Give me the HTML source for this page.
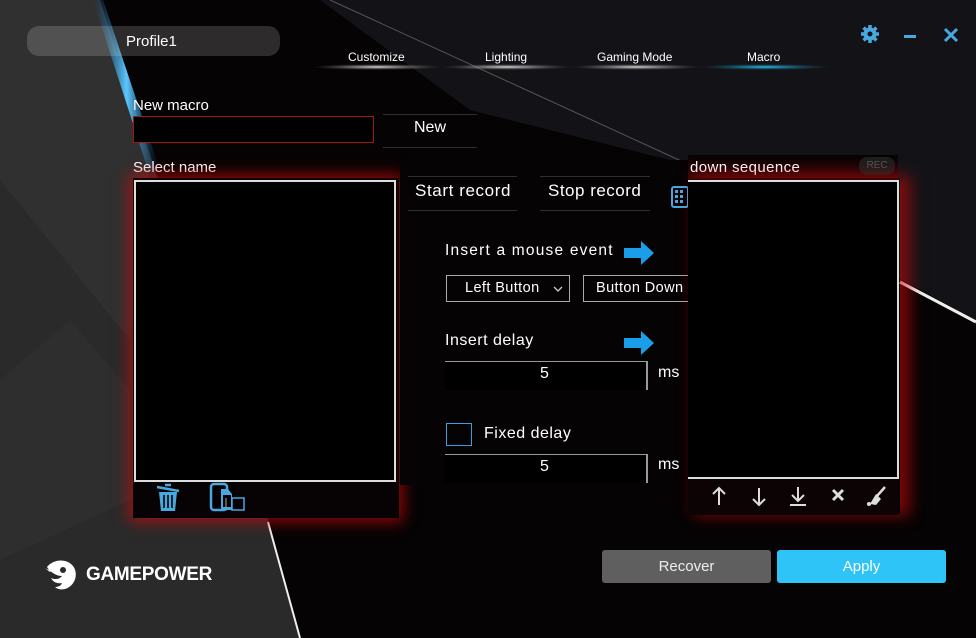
<!DOCTYPE html>
<html><head><meta charset="utf-8"><style>
*{margin:0;padding:0;box-sizing:border-box}
body{width:976px;height:638px;overflow:hidden;background:#050304;font-family:"Liberation Sans",sans-serif;color:#fff;position:relative}
.a{position:absolute}
.t{position:absolute;white-space:nowrap;line-height:1}
</style></head><body>
<svg class="a" style="left:0;top:0" width="976" height="638">
<defs>
<linearGradient id="bl" x1="0" x2="1"><stop offset="0" stop-color="#0a4a80" stop-opacity="0"/><stop offset="0.5" stop-color="#5cc8ff"/><stop offset="1" stop-color="#0a4a80" stop-opacity="0"/></linearGradient>
<radialGradient id="ul"><stop offset="0" stop-color="#ddd"/><stop offset="1" stop-color="#666" stop-opacity="0"/></radialGradient>
<radialGradient id="uc"><stop offset="0" stop-color="#2fc0f0"/><stop offset="1" stop-color="#0a6080" stop-opacity="0"/></radialGradient>
</defs>
<polygon points="0,0 100,0 270,525 300,638 0,638" fill="#2a2a2a"/>
<polygon points="0,0 100,0 150,160 130,340 0,180" fill="#303030"/>
<polygon points="0,380 70,320 130,390 130,500 0,560" fill="#2e2e2e"/>
<polygon points="320,0 976,0 976,320 690,165 470,110" fill="#131317"/>
<line x1="330" y1="0" x2="690" y2="165" stroke="#555" stroke-width="1"/>
<line x1="900" y1="282" x2="976" y2="322" stroke="#eee" stroke-width="3"/>
<line x1="268" y1="522" x2="300" y2="638" stroke="#eee" stroke-width="2"/>
<polygon points="93,0 103,0 160,170 148,170" fill="url(#bl)"/>
<ellipse cx="377" cy="67" rx="65" ry="3" fill="url(#ul)"/>
<ellipse cx="507" cy="67" rx="65" ry="3" fill="url(#ul)"/>
<ellipse cx="636" cy="67" rx="65" ry="3" fill="url(#ul)"/>
<ellipse cx="765" cy="67" rx="65" ry="3" fill="url(#uc)"/>
</svg>
<div class="a" style="left:27px;top:26px;width:253px;height:30px;border-radius:12px;background:rgba(255,255,255,0.16)"></div>
<div class="t" style="left:126px;top:34px;font-size:15px">Profile1</div>
<div class="t" style="left:348px;top:51px;font-size:12px">Customize</div>
<div class="t" style="left:485px;top:51px;font-size:12px">Lighting</div>
<div class="t" style="left:597px;top:51px;font-size:12px">Gaming Mode</div>
<div class="t" style="left:747px;top:51px;font-size:12px">Macro</div>
<svg class="a" style="left:860px;top:24px" width="20" height="20" viewBox="0 0 20 20"><g fill="#4aa8e0"><circle cx="10" cy="10" r="6.5"/><g stroke="#4aa8e0" stroke-width="3.5"><line x1="10" y1="1" x2="10" y2="19"/><line x1="1" y1="10" x2="19" y2="10"/><line x1="3.6" y1="3.6" x2="16.4" y2="16.4"/><line x1="16.4" y1="3.6" x2="3.6" y2="16.4"/></g></g><circle cx="10" cy="10" r="2.5" fill="#131317"/></svg>
<div class="a" style="left:904px;top:35px;width:12px;height:3px;background:#4aa8e0"></div>
<svg class="a" style="left:943px;top:27px" width="16" height="16"><path d="M2 2L14 14M14 2L2 14" stroke="#4aa8e0" stroke-width="3"/></svg>
<div class="t" style="left:133px;top:98px;font-size:15px">New macro</div>
<div class="a" style="left:133px;top:116px;width:241px;height:27px;background:#000;border:1px solid #a01818"></div>
<div class="a" style="left:383px;top:114px;width:94px;height:34px;border-top:1px solid #2a2f38;border-bottom:1px solid #2a2f38"></div>
<div class="t" style="left:414px;top:120px;font-size:16px">New</div>
<div class="t" style="left:133px;top:160px;font-size:15px">Select name</div>
<div class="a" style="left:133px;top:178px;width:266px;height:340px;box-shadow:0 0 14px 4px rgba(200,10,10,0.7);background:#100406"></div>
<div class="a" style="left:134px;top:180px;width:262px;height:302px;background:#000;border:2px solid #ddd"></div>
<div class="a" style="left:134px;top:482px;width:265px;height:36px;background:#070203"></div>
<svg class="a" style="left:155px;top:480px" width="28" height="34" viewBox="0 0 28 34"><path d="M2 7L24 11" stroke="#4aa8e0" stroke-width="2.5"/><path d="M10 5h6" stroke="#4aa8e0" stroke-width="2.5"/><path d="M4 12h18l-2 19H6z" fill="#4aa8e0"/><path d="M9 15v13M13 15v13M17 15v13" stroke="#070203" stroke-width="1.6"/></svg>
<svg class="a" style="left:208px;top:481px" width="38" height="36" viewBox="0 0 38 36"><rect x="3" y="3" width="16" height="26" rx="3" fill="none" stroke="#4aa8e0" stroke-width="2.5"/><path d="M13 8h7l4 5v16H13z" fill="#4aa8e0"/><rect x="15" y="14" width="8" height="12" fill="#070203"/><rect x="24" y="17" width="12" height="12" fill="none" stroke="#4aa8e0" stroke-width="1.5"/><path d="M18 17v10" stroke="#aaa" stroke-width="1"/></svg>
<div class="a" style="left:400px;top:160px;width:288px;height:325px;background:#060304"></div>
<div class="a" style="left:408px;top:176px;width:109px;height:35px;border-top:1px solid #2a2f38;border-bottom:1px solid #2a2f38"></div>
<div class="t" style="left:415px;top:182px;font-size:17px;letter-spacing:0.6px">Start record</div>
<div class="a" style="left:540px;top:176px;width:110px;height:35px;border-top:1px solid #2a2f38;border-bottom:1px solid #2a2f38"></div>
<div class="t" style="left:548px;top:182px;font-size:17px;letter-spacing:0.5px">Stop record</div>
<svg class="a" style="left:671px;top:186px" width="17" height="22"><rect x="1" y="1" width="16" height="20" rx="2" fill="none" stroke="#4aa8e0" stroke-width="2"/><g fill="#4aa8e0"><rect x="4" y="4" width="3" height="3"/><rect x="9" y="4" width="3" height="3"/><rect x="4" y="9" width="3" height="3"/><rect x="9" y="9" width="3" height="3"/><rect x="4" y="14" width="3" height="3"/><rect x="9" y="14" width="3" height="3"/></g></svg>
<div class="t" style="left:445px;top:243px;font-size:15.5px;letter-spacing:1.2px">Insert a mouse event</div>
<svg class="a" style="left:624px;top:241px" width="31" height="24"><path d="M0 7h17V0l13 12-13 12v-7H0z" fill="#1a9ee8"/></svg>
<div class="a" style="left:446px;top:275px;width:124px;height:27px;border:1px solid #aaa"></div>
<div class="t" style="left:465px;top:281px;font-size:14.5px;letter-spacing:0.4px">Left Button</div>
<svg class="a" style="left:553px;top:286px" width="10" height="7"><path d="M1 1l4 4 4-4" stroke="#ccc" fill="none" stroke-width="1.3"/></svg>
<div class="a" style="left:583px;top:275px;width:110px;height:27px;border:1px solid #aaa"></div>
<div class="t" style="left:596px;top:281px;font-size:14.5px;letter-spacing:0.4px">Button Down</div>
<div class="t" style="left:445px;top:333px;font-size:16px;letter-spacing:0.5px">Insert delay</div>
<svg class="a" style="left:624px;top:331px" width="31" height="24"><path d="M0 7h17V0l13 12-13 12v-7H0z" fill="#1a9ee8"/></svg>
<div class="a" style="left:445px;top:361px;width:203px;height:29px;border-top:1px solid #999;border-right:2px solid #999;background:#000"></div>
<div class="t" style="left:540px;top:366px;font-size:16px">5</div>
<div class="t" style="left:658px;top:365px;font-size:16px">ms</div>
<div class="a" style="left:446px;top:423px;width:26px;height:23px;border:1.5px solid #3a9ee0"></div>
<div class="t" style="left:484px;top:426px;font-size:16px;letter-spacing:0.5px">Fixed delay</div>
<div class="a" style="left:445px;top:454px;width:203px;height:29px;border-top:1px solid #999;border-right:2px solid #999;background:#000"></div>
<div class="t" style="left:540px;top:459px;font-size:16px">5</div>
<div class="t" style="left:658px;top:457px;font-size:16px">ms</div>
<div class="a" style="left:688px;top:155px;width:210px;height:25px;background:linear-gradient(#050304,#3a0508)"></div>
<div class="t" style="left:690px;top:160px;font-size:15px;letter-spacing:0.4px">down sequence</div>
<div class="a" style="left:859px;top:157px;width:36px;height:18px;border-radius:8px;background:#1e1e1e;color:#555;font-size:10px;text-align:center;line-height:18px">REC</div>
<div class="a" style="left:688px;top:178px;width:212px;height:336px;box-shadow:8px 0 14px 2px rgba(200,10,10,0.6)"></div>
<div class="a" style="left:688px;top:180px;width:211px;height:299px;background:#000;border:2px solid #ddd;border-left:none"></div>
<div class="a" style="left:688px;top:479px;width:210px;height:36px;background:#0c0304"></div>
<svg class="a" style="left:705px;top:484px" width="190" height="26" viewBox="0 0 190 26" fill="none" stroke="#ddd" stroke-width="2"><path d="M14 21V4M8 10l6-6 6 6"/><path d="M54 4v17M48 15l6 6 6-6"/><path d="M93 3v14M87 11l6 6 6-6M85 21h16"/><path d="M128 6l10 10M138 6l-10 10" stroke-width="3"/><path d="M180 3l-8 9" stroke-width="2.5"/><path d="M171 10l5 5-5 6-6-1z" fill="#ddd" stroke="none"/><circle cx="164" cy="20" r="1" fill="#ddd"/></svg>
<div class="a" style="left:602px;top:550px;width:169px;height:33px;background:#5f5f5f;border-radius:3px;color:#eee;font-size:15px;text-align:center;line-height:33px">Recover</div>
<div class="a" style="left:777px;top:550px;width:169px;height:33px;background:#2ec4f8;border-radius:3px;color:#fff;font-size:15px;text-align:center;line-height:33px">Apply</div>
<svg class="a" style="left:43px;top:557px" width="36" height="36" viewBox="0 0 36 36"><path d="M4 10C10 2 24 1 30 9c6 8 2 20-8 23-4 1-8 0-10-2 3 0 6-1 7-4-5 1-9-1-11-5 4 2 9 1 11-2C14 19 8 16 4 10z" fill="#fff"/><circle cx="20" cy="13" r="3" fill="#2a2a2a"/><path d="M2 11c3 2 5 2 8 1l-3 3z" fill="#fff"/></svg>
<div class="t" style="left:86px;top:565px;font-size:19px;font-weight:bold;letter-spacing:-0.3px">GAMEPOWER</div>
</body></html>
